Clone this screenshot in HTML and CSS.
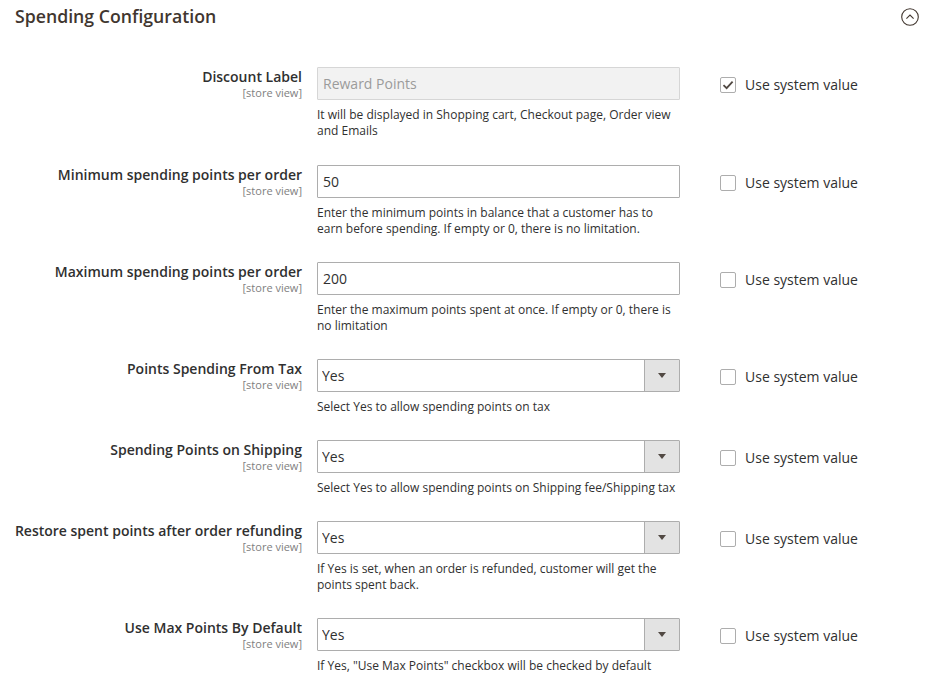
FILE: index.html
```html
<!DOCTYPE html>
<html>
<head>
<meta charset="utf-8">
<link rel="stylesheet" href="styles.css">
</head>
<body>
<div class="section">
  <div class="section-head">
    <h2 class="title">Spending Configuration</h2>
    <svg class="toggle" width="20" height="20" viewBox="0 0 20 20"><circle cx="10" cy="10" r="8.3" fill="none" stroke="#41362f" stroke-width="1.1"/><path d="M6.4 11.6 L10 8.1 L13.6 11.6" fill="none" stroke="#41362f" stroke-width="1.1"/></svg>
  </div>

  <div class="fields">
    <div class="row">
      <div class="label"><span class="name">Discount Label</span><span class="scope">[store view]</span></div>
      <div class="value">
        <input class="text disabled" type="text" value="Reward Points" disabled>
        <p class="note">It will be displayed in Shopping cart, Checkout page, Order view and Emails</p>
      </div>
      <label class="inherit"><span class="box checked"><svg width="12" height="10" viewBox="0 0 12 10"><path d="M1.5 5.2 L4.6 8.2 L10.6 1.6" fill="none" stroke="#514943" stroke-width="1.8"/></svg></span>Use system value</label>
    </div>

    <div class="row">
      <div class="label"><span class="name">Minimum spending points per order</span><span class="scope">[store view]</span></div>
      <div class="value">
        <input class="text" type="text" value="50">
        <p class="note">Enter the minimum points in balance that a customer has to earn before spending. If empty or 0, there is no limitation.</p>
      </div>
      <label class="inherit"><span class="box"></span>Use system value</label>
    </div>

    <div class="row">
      <div class="label"><span class="name">Maximum spending points per order</span><span class="scope">[store view]</span></div>
      <div class="value">
        <input class="text" type="text" value="200">
        <p class="note">Enter the maximum points spent at once. If empty or 0, there is no limitation</p>
      </div>
      <label class="inherit"><span class="box"></span>Use system value</label>
    </div>

    <div class="row">
      <div class="label"><span class="name">Points Spending From Tax</span><span class="scope">[store view]</span></div>
      <div class="value">
        <div class="select"><select><option>Yes</option><option>No</option></select></div>
        <p class="note">Select Yes to allow spending points on tax</p>
      </div>
      <label class="inherit"><span class="box"></span>Use system value</label>
    </div>

    <div class="row">
      <div class="label"><span class="name">Spending Points on Shipping</span><span class="scope">[store view]</span></div>
      <div class="value">
        <div class="select"><select><option>Yes</option><option>No</option></select></div>
        <p class="note">Select Yes to allow spending points on Shipping fee/Shipping tax</p>
      </div>
      <label class="inherit"><span class="box"></span>Use system value</label>
    </div>

    <div class="row">
      <div class="label"><span class="name">Restore spent points after order refunding</span><span class="scope">[store view]</span></div>
      <div class="value">
        <div class="select"><select><option>Yes</option><option>No</option></select></div>
        <p class="note">If Yes is set, when an order is refunded, customer will get the points spent back.</p>
      </div>
      <label class="inherit"><span class="box"></span>Use system value</label>
    </div>

    <div class="row">
      <div class="label"><span class="name">Use Max Points By Default</span><span class="scope">[store view]</span></div>
      <div class="value">
        <div class="select"><select><option>Yes</option><option>No</option></select></div>
        <p class="note">If Yes, "Use Max Points" checkbox will be checked by default</p>
      </div>
      <label class="inherit"><span class="box"></span>Use system value</label>
    </div>
  </div>
</div>
</body>
</html>
```

FILE: styles.css
```css
html, body {
  margin: 0;
  padding: 0;
  background: #fff;
}
body {
  font-family: "Open Sans", "DejaVu Sans", sans-serif;
  color: #303030;
}
.section {
  width: 947px;
}
.section-head {
  display: flex;
  align-items: center;
  justify-content: space-between;
  padding: 5px 27px 0 15px;
  height: 22px;
}
.title {
  margin: 0;
  font-size: 17.7px;
  font-weight: 600;
  line-height: 22px;
  color: #41362f;
}
.toggle {
  display: block;
  margin-top: 1px;
}
.fields {
  padding-top: 40px;
}
.row {
  display: grid;
  grid-template-columns: 302px 363px 1fr;
  column-gap: 15px;
  padding-bottom: 25px;
}
.row:first-child {
  padding-bottom: 26px;
}
.label {
  display: flex;
  flex-direction: column;
  align-items: flex-end;
  text-align: right;
}
.name {
  font-size: 14px;
  font-weight: 600;
  line-height: 19px;
  color: #303030;
}
.scope {
  font-size: 11px;
  line-height: 14px;
  color: #808080;
}
.value {
  min-width: 0;
}
.text {
  display: block;
  box-sizing: border-box;
  width: 363px;
  height: 33px;
  margin: 0;
  padding: 0 5px;
  border: 1px solid #adadad;
  border-radius: 1px;
  background: #fff;
  font-family: "Open Sans", "DejaVu Sans", sans-serif;
  font-size: 14px;
  color: #303030;
  outline: none;
}
.text.disabled {
  background: #f2f2f2;
  border-color: #d6d6d6;
  color: #9b9b9b;
  opacity: 1;
}
.select {
  position: relative;
  width: 363px;
  height: 33px;
}
.select select {
  display: block;
  box-sizing: border-box;
  width: 100%;
  height: 33px;
  margin: 0;
  padding: 0 40px 0 4px;
  border: 1px solid #adadad;
  border-radius: 1px;
  background: #fff;
  font-family: "Open Sans", "DejaVu Sans", sans-serif;
  font-size: 14px;
  color: #303030;
  appearance: none;
  -webkit-appearance: none;
  outline: none;
}
.select::before {
  content: "";
  position: absolute;
  top: 1px;
  right: 1px;
  bottom: 1px;
  width: 34px;
  background: #e3e3e3;
  border-left: 1px solid #adadad;
  pointer-events: none;
}
.select::after {
  content: "";
  position: absolute;
  top: 14px;
  right: 14px;
  width: 0;
  height: 0;
  border-left: 4px solid transparent;
  border-right: 4px solid transparent;
  border-top: 5px solid #514943;
  pointer-events: none;
}
.note {
  margin: 7px 0 0;
  font-size: 12px;
  line-height: 16px;
  color: #303030;
}
.inherit {
  display: flex;
  align-items: center;
  height: 20px;
  margin-top: 8px;
  padding-left: 25px;
  font-size: 14px;
  line-height: 20px;
  color: #303030;
}
.box {
  box-sizing: border-box;
  width: 16px;
  height: 16px;
  margin-right: 9px;
  border: 1px solid #adadad;
  border-radius: 2px;
  background: #fff;
  display: flex;
  align-items: center;
  justify-content: center;
}
```
